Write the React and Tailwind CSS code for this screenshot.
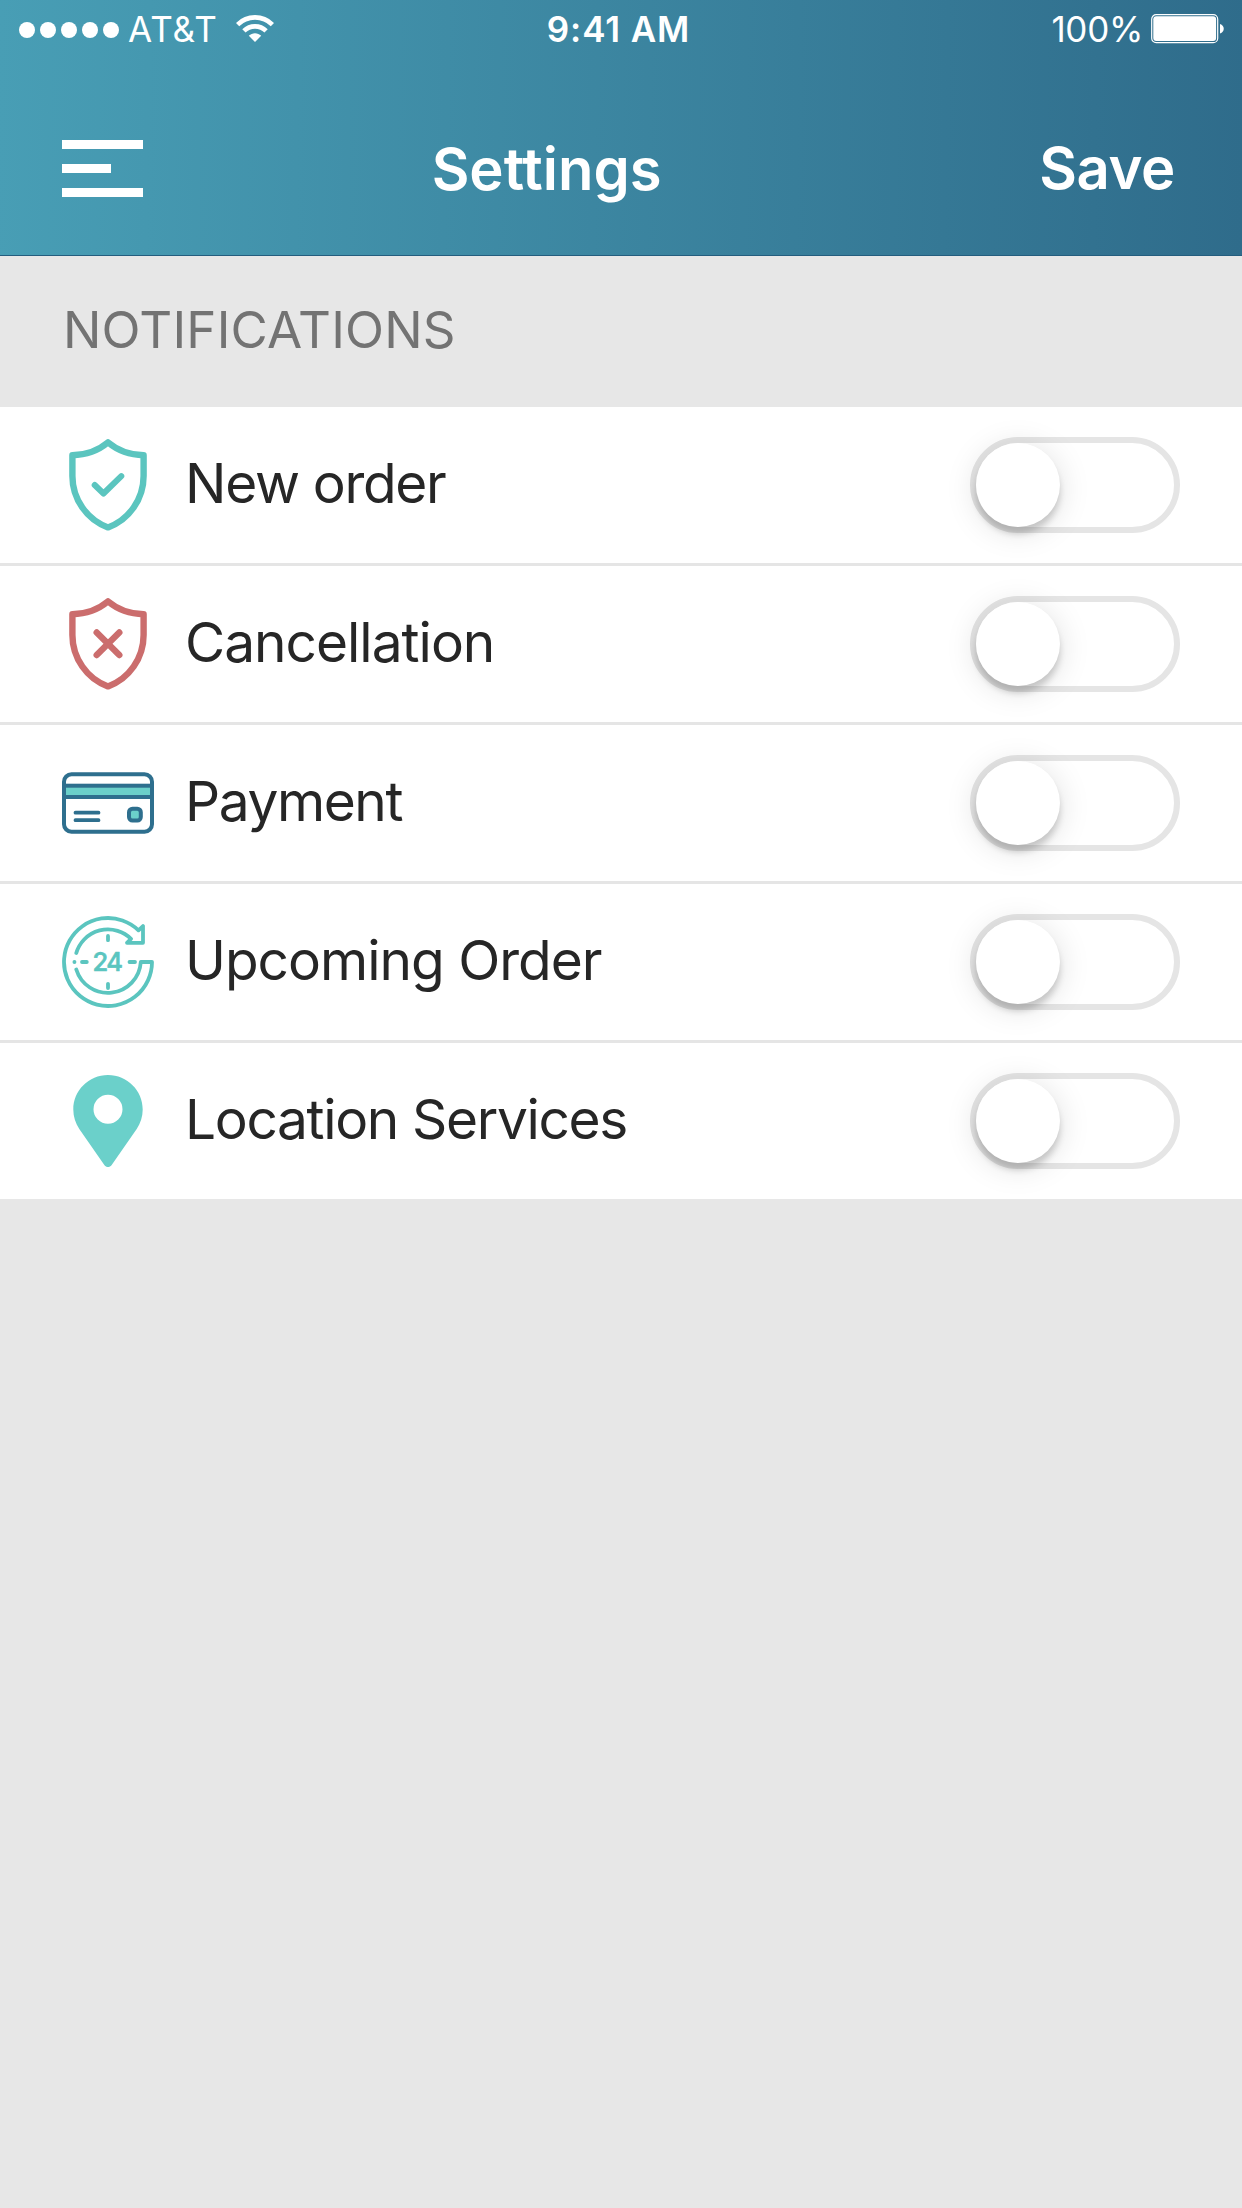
import React, { useState } from 'react';

function ShieldIcon({ className, children }) {
  return (
    <svg viewBox="0 0 92 92" className={className} fill="none" stroke="currentColor" strokeWidth="6.4" strokeLinecap="round" strokeLinejoin="round">
      <path d="M46 3.4C37 11 25 16 10.4 16.2V37C10.4 60 25 81 46 88.4C67 81 81.6 60 81.6 37V16.2C67 16 55 11 46 3.4Z" />
      {children}
    </svg>
  );
}

function CardIcon() {
  return (
    <svg viewBox="0 0 92 92" className="w-[92px] h-[92px]" fill="none" stroke="#2e6f8e" strokeWidth="4" strokeLinecap="round">
      <rect x="2" y="28.7" width="88" height="11.3" fill="#6bd0ca" />
      <rect x="2" y="17.3" width="88" height="57.4" rx="7.5" />
      <path d="M13.5 55.7H36.5M13.5 63.2H36.5" strokeWidth="3.8" />
      <rect x="67" y="51.7" width="11.8" height="11.8" rx="3.5" fill="#6bd0ca" />
    </svg>
  );
}

function ClockIcon() {
  return (
    <svg viewBox="0 0 92 92" className="w-[92px] h-[92px]" fill="none" stroke="#5bc5bf" strokeWidth="3.8" strokeLinecap="round" strokeLinejoin="round">
      <path d="M14.3 53.5A33 33 0 0 0 78.8 46H90A44 44 0 1 1 76.5 14.3L81 10V26.8H65L69 22.8A33 33 0 0 0 14.3 37" />
      <path d="M46 20V24.2M46 67.8V72M20 46H24.8M67.5 46H73M12.4 46H12.5" />
      <text x="30.5" y="54.8" textLength="30.5" lengthAdjust="spacing" fill="#5bc5bf" strokeWidth="0.6" className="font-['Inter',sans-serif] text-[25.5px] font-medium">24</text>
    </svg>
  );
}

function PinIcon() {
  return (
    <svg viewBox="0 0 92 92" className="w-[92px] h-[92px]" fill="#6bd0ca">
      <path fillRule="evenodd" d="M46 0C26.8 0 11.3 15.5 11.3 34.5C11.3 41.5 13.5 48 17.3 54L42.5 90.2C44.2 92.6 47.8 92.6 49.5 90.2L74.7 54C78.5 48 80.7 41.5 80.7 34.5C80.7 15.5 65.2 0 46 0ZM46 19.8A14.5 14.5 0 1 1 46 48.8A14.5 14.5 0 1 1 46 19.8Z" />
    </svg>
  );
}

const settings = [
  {
    id: 'new-order',
    label: 'New order',
    spacing: 'tracking-[-1.3px]',
    icon: (
      <ShieldIcon className="w-[92px] h-[92px] text-[#5bc5bf]">
        <path d="M32.7 46L41.5 54.5L59.3 37.2" strokeWidth="6" />
      </ShieldIcon>
    ),
  },
  {
    id: 'cancellation',
    label: 'Cancellation',
    spacing: 'tracking-[-1px]',
    icon: (
      <ShieldIcon className="w-[92px] h-[92px] text-[#cb6d6d]">
        <path d="M34.7 34.5L57.3 57M57.3 34.5L34.7 57" />
      </ShieldIcon>
    ),
  },
  { id: 'payment', label: 'Payment', spacing: 'tracking-[-1.4px]', icon: <CardIcon /> },
  { id: 'upcoming', label: 'Upcoming Order', spacing: 'tracking-[-1px]', icon: <ClockIcon /> },
  { id: 'location', label: 'Location Services', spacing: 'tracking-[-1.35px]', icon: <PinIcon /> },
];

function Toggle({ on, onChange, label }) {
  return (
    <button
      role="switch"
      aria-checked={on}
      aria-label={label}
      onClick={onChange}
      className={`flex w-[210px] h-24 shrink-0 rounded-full border-[6px] cursor-pointer ${on ? 'justify-end bg-[#5bc5bf] border-[#5bc5bf]' : 'bg-white border-[#e5e5e5]'}`}
    >
      <span className="w-[84px] h-[84px] rounded-full bg-white shadow-[0_7px_6px_rgba(0,0,0,0.17),0_4px_32px_rgba(0,0,0,0.13)]" />
    </button>
  );
}

function StatusBar() {
  return (
    <div className="grid grid-cols-3 h-[58px] pl-[19px] pr-[17px] text-[35px] leading-[59px] text-white">
      {/* Carrier */}
      <div className="flex items-center">
        <div className="flex gap-[5px]">
          {[0, 1, 2, 3, 4].map((i) => (
            <span key={i} className="w-4 h-4 rounded-full bg-white" />
          ))}
        </div>
        <span className="ml-[9px] tracking-[1px]">AT&amp;T</span>
        <svg viewBox="0 0 38 27" className="ml-[18px] mb-0.5 w-[38px] h-[27px]" fill="none" stroke="white" strokeWidth="4.6">
          <path d="M1.6 9.6C11.2 0 26.8 0 36.4 9.6" />
          <path d="M7.9 15.9C14 9.8 24 9.8 30.1 15.9" />
          <path d="M19 27L12.8 20.8C16.2 17.4 21.8 17.4 25.2 20.8Z" fill="white" stroke="none" />
        </svg>
      </div>

      <span className="text-center font-semibold tracking-[0.9px] pr-[7px]">9:41 AM</span>

      {/* Battery */}
      <div className="flex items-center justify-end">
        <span className="tracking-[-0.3px]">100%</span>
        <svg viewBox="0 0 74 30" className="ml-2 mb-px w-[74px] h-[30px]" fill="white">
          <rect x="0.7" y="0.7" width="66" height="28" rx="4.5" fill="none" stroke="white" strokeWidth="1.2" />
          <rect x="2.3" y="2.3" width="62.8" height="24.8" rx="3" />
          <path d="M69 10C74 11.5 74 18 69 19.5Z" />
        </svg>
      </div>
    </div>
  );
}

function App() {
  const [enabled, setEnabled] = useState({});

  const toggle = (id) => setEnabled((prev) => ({ ...prev, [id]: !prev[id] }));

  return (
    <div className="w-[1242px] h-[2208px] bg-[#e7e7e7] font-['Inter',sans-serif] select-none overflow-hidden">
      {/* Header */}
      <header className="h-64 border-b border-[#245d7e] bg-linear-[91deg,#489eb5,#2f6c8b] text-white">
        <StatusBar />
        <div className="flex items-center justify-between h-[222px] -mt-px pl-[62px] pr-[67px]">
          <button aria-label="Menu" className="flex flex-col gap-[15px] w-[82px] cursor-pointer">
            <span className="w-[81px] h-[9px] bg-white" />
            <span className="w-[49px] h-[9px] bg-white" />
            <span className="w-[81px] h-[9px] bg-white" />
          </button>
          <h1 className="pt-0.5 pr-[90px] text-[58px] font-semibold">Settings</h1>
          <button className="text-[58px] font-semibold tracking-[-0.4px] cursor-pointer">Save</button>
        </div>
      </header>

      {/* Section title */}
      <h2 className="h-[151px] pl-[63px] text-[51px] leading-[147px] tracking-[0.2px] text-[#737373]">NOTIFICATIONS</h2>

      {/* Options */}
      <ul className="bg-white divide-y-[3px] divide-[#e5e5e5]">
        {settings.map(({ id, label, spacing, icon }) => (
          <li key={id} className="flex items-center px-[62px] text-[#262626]">
            <div className="flex items-center flex-1 h-[156px] gap-[31px]">
              {icon}
              <span className={`pb-1 text-[55px] leading-none ${spacing}`}>{label}</span>
            </div>
            <Toggle on={!!enabled[id]} onChange={() => toggle(id)} label={label} />
          </li>
        ))}
      </ul>
    </div>
  );
}

export default App;
